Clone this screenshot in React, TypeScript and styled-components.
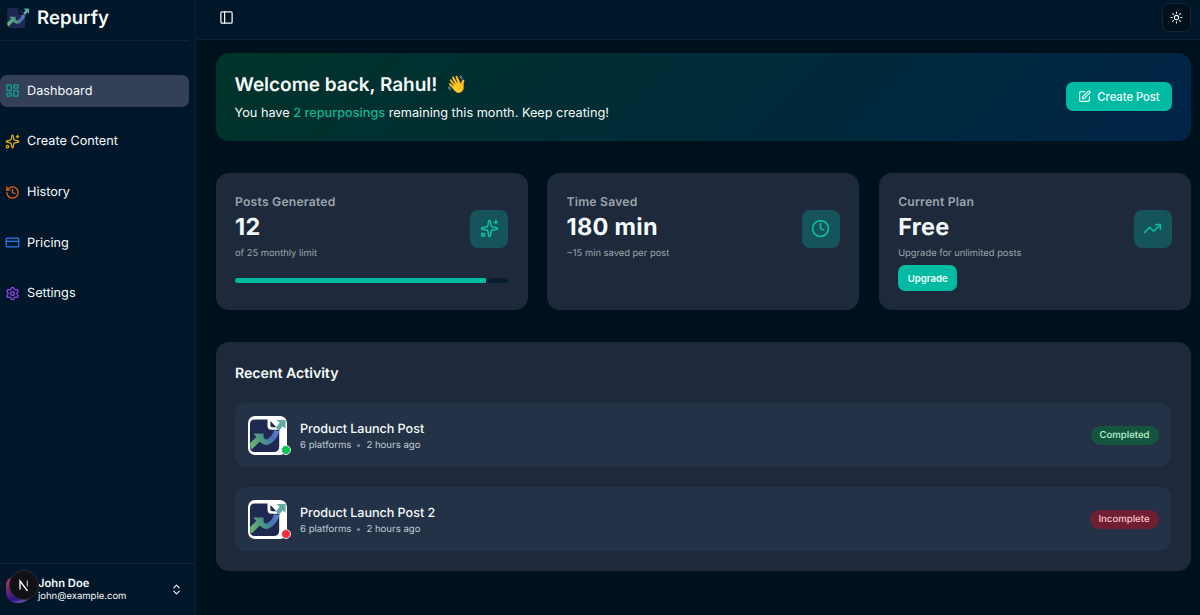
import React from "react";
import styled, { createGlobalStyle } from "styled-components";
import {
  ChevronsUpDown,
  Clock,
  CreditCard,
  History,
  LayoutDashboard,
  PanelLeft,
  Settings,
  Sparkles,
  SquarePen,
  Sun,
  TrendingUp,
} from "lucide-react";

const GlobalStyle = createGlobalStyle`
  *, *::before, *::after { box-sizing: border-box; }
  body {
    margin: 0;
    background: #00111e;
    color: #f5fafa;
    font-family: Inter, "Liberation Sans", sans-serif;
    -webkit-font-smoothing: antialiased;
    text-rendering: geometricPrecision;
  }
  h1, h2, h3, p { margin: 0; }
  button { font: inherit; border: 0; padding: 0; color: inherit; }
`;

const Shell = styled.div`
  display: grid;
  grid-template-columns: 196px 1fr;
  height: 615px;
  overflow: hidden;
`;

const Sidebar = styled.aside`
  display: flex;
  flex-direction: column;
  background: #001629;
  border-right: 1px solid #0a2231;
`;

const Brand = styled.div`
  display: flex;
  align-items: center;
  gap: 7px;
  height: 41px;
  width: 189px;
  padding: 0 0 4px 6px;
  border-bottom: 1px solid #0c2436;
`;

const BrandName = styled.span`
  font-size: 18.6px;
  font-weight: 600;
  line-height: 24px;
  letter-spacing: 0.05px;
`;

const Nav = styled.nav`
  display: flex;
  flex-direction: column;
  gap: 19.2px;
  width: 189px;
  padding-top: 34px;
  flex: 1;
`;

const NavItem = styled.a<{ $active?: boolean }>`
  display: flex;
  align-items: center;
  gap: 7px;
  height: 31.5px;
  padding-left: 5px;
  border-radius: 7px;
  font-size: 12.7px;
  background: ${(p) => (p.$active ? "#334057" : "transparent")};
`;

const NavLabel = styled.span`
  padding-top: 1.6px;
  line-height: 18px;
`;

const UserBar = styled.div`
  display: flex;
  align-items: center;
  height: 52px;
  padding: 0 12px 0 6px;
  border-top: 1px solid #0c2436;
`;

const AvatarStack = styled.div`
  position: relative;
  width: 32px;
  height: 32px;
  flex: none;
`;

const Avatar = styled.div`
  width: 26px;
  height: 26px;
  margin-top: 3px;
  border-radius: 8px 8px 13px 10px;
  background: linear-gradient(165deg, #b03560 10%, #6b2470 45%, #2b1685 75%, #8b7fb0 100%);
`;

const DevBadge = styled.div`
  position: absolute;
  left: 4px;
  top: -3px;
  width: 28px;
  height: 28px;
  border-radius: 50%;
  background: #111116;
  box-shadow: 0 0 0 1px #2b2a30;
  display: flex;
  align-items: center;
  justify-content: center;
`;

const UserText = styled.div`
  flex: 1;
  display: flex;
  flex-direction: column;
  padding-top: 2px;
`;

const UserName = styled.span`
  font-size: 11.2px;
  font-weight: 600;
  line-height: 13px;
`;

const UserMail = styled.span`
  font-size: 9.5px;
  line-height: 14px;
`;

const Main = styled.main`
  display: flex;
  flex-direction: column;
  min-width: 0;
`;

const TopBar = styled.header`
  display: flex;
  align-items: center;
  justify-content: space-between;
  height: 40px;
  padding: 0 9px 4px 23px;
  background: #001629;
  border-bottom: 1px solid #0a2231;
`;

const ThemeButton = styled.button`
  display: flex;
  align-items: center;
  justify-content: center;
  width: 29px;
  height: 29px;
  border: 1px solid #162733;
  border-radius: 7px;
  background: #00111e;
`;

const Content = styled.div`
  display: flex;
  flex-direction: column;
  gap: 32px;
  padding: 13px 9px 0 19.5px;
`;

const Banner = styled.section`
  display: flex;
  align-items: center;
  justify-content: space-between;
  height: 88px;
  padding: 0 19px;
  border-radius: 13px;
  background: linear-gradient(135deg, #003329, #002447);
`;

const Welcome = styled.h1`
  display: flex;
  align-items: center;
  gap: 9px;
  font-size: 19px;
  line-height: 26px;
  font-weight: 600;
  letter-spacing: -0.02px;
`;

const Wave = styled.span`
  font-size: 17px;
`;

const WelcomeNote = styled.p`
  margin-top: 6px;
  font-size: 12.72px;
  line-height: 19px;
`;

const Accent = styled.span`
  color: #13b394;
  font-weight: 500;
`;

const PrimaryButton = styled.button<{ $small?: boolean }>`
  display: inline-flex;
  align-items: center;
  justify-content: center;
  gap: 6px;
  align-self: ${(p) => (p.$small ? "flex-start" : "auto")};
  width: ${(p) => (p.$small ? 59 : 106)}px;
  height: ${(p) => (p.$small ? 26 : 29)}px;
  margin-top: ${(p) => (p.$small ? 0 : -1)}px;
  border-radius: 7px;
  background: #00bba2;
  color: #f4fffd;
  font-size: ${(p) => (p.$small ? 9.6 : 11.2)}px;
  font-weight: ${(p) => (p.$small ? 600 : 500)};
`;

const Stats = styled.section`
  display: grid;
  grid-template-columns: repeat(3, 1fr);
  gap: 19.2px;
`;

const StatCard = styled.article`
  display: flex;
  flex-direction: column;
  height: 137px;
  padding: 20px 19.5px 0;
  border-radius: 13px;
  background: #1e2a3c;
`;

const StatTop = styled.div`
  display: flex;
  align-items: center;
  justify-content: space-between;
  height: 70px;
`;

const StatLabel = styled.h3`
  color: #9ca5ab;
  font-size: 12.2px;
  line-height: 18px;
  font-weight: 600;
  letter-spacing: 0.2px;
`;

const StatValue = styled.p`
  font-size: 23.5px;
  line-height: 32px;
  font-weight: 700;
  letter-spacing: 0.3px;
`;

const StatHint = styled.p`
  padding-top: 2px;
  color: #9ca5ab;
  font-size: 9.4px;
  line-height: 18px;
`;

const StatIcon = styled.div`
  display: flex;
  align-items: center;
  justify-content: center;
  width: 38px;
  height: 38px;
  margin-top: 1px;
  border-radius: 8px;
  background: #14545a;
  color: #12bd9f;
`;

const Track = styled.div`
  height: 5px;
  margin-top: 14.5px;
  border-radius: 3px;
  overflow: hidden;
  background: #0b1e2f;
`;

const TrackFill = styled.div`
  height: 100%;
  background: #00bba2;
`;

const Upgrade = styled.div`
  display: flex;
  padding-top: 2px;
`;

const Panel = styled.section`
  height: 229px;
  padding: 20px 20px 0 19.5px;
  border-radius: 13px;
  background: #1e2a3c;
`;

const PanelTitle = styled.h2`
  font-size: 14.2px;
  line-height: 24px;
  font-weight: 600;
  letter-spacing: -0.05px;
`;

const Rows = styled.div`
  display: flex;
  flex-direction: column;
  gap: 20px;
  padding-top: 17px;
`;

const Row = styled.article`
  display: flex;
  align-items: center;
  height: 64px;
  padding: 0 12.5px;
  border-radius: 11px;
  background: #243247;
`;

const Thumb = styled.div`
  position: relative;
  width: 39px;
  height: 39px;
  margin-right: 13.5px;
  border-radius: 7px;
  background: #fff;
`;

const StatusDot = styled.span<{ $done: boolean }>`
  position: absolute;
  right: -4px;
  bottom: 0;
  width: 10px;
  height: 10px;
  border-radius: 50%;
  border: 1px solid #e8eeee;
  background: ${(p) => (p.$done ? "#00c551" : "#fb2c36")};
`;

const RowText = styled.div`
  flex: 1;
  padding-top: 4px;
`;

const RowTitle = styled.h3`
  font-size: 12.6px;
  line-height: 17px;
  font-weight: 550;
  letter-spacing: -0.04px;
`;

const RowMeta = styled.p`
  display: flex;
  align-items: center;
  gap: 6px;
  color: #c0cad7;
  font-size: 9.6px;
  line-height: 15px;
`;

const Bullet = styled.span`
  width: 3px;
  height: 3px;
  border-radius: 50%;
  background: #7d8a9c;
`;

const Badge = styled.span<{ $done: boolean }>`
  display: flex;
  align-items: center;
  justify-content: center;
  width: ${(p) => (p.$done ? 68 : 69)}px;
  height: 19px;
  border-radius: 10px;
  font-size: 9.6px;
  font-weight: 500;
  background: ${(p) => (p.$done ? "#155540" : "#701f32")};
  color: ${(p) => (p.$done ? "#b5f5cd" : "#fcc8ca")};
`;

function Mark({ size, id }: { size: number; id: string }) {
  return (
    <svg width={size} height={size} viewBox="0 0 40 40" fill="none">
      <defs>
        <linearGradient id={id} x1="2" y1="30" x2="34" y2="14" gradientUnits="userSpaceOnUse">
          <stop stopColor="#6cb66c" />
          <stop offset="0.4" stopColor="#4b9683" />
          <stop offset="0.65" stopColor="#4872b5" />
          <stop offset="1" stopColor="#6f80d8" />
        </linearGradient>
      </defs>
      <path d="M7 3.500H20V10Q20 14 24 14H32V31Q32 37 26 37H7Q2 37 2 31V8.500Q2 3.500 7 3.500Z" fill="#1e2850" />
      <path d="M23 5L29 11.500H25Q23 11.500 23 9.500Z" fill="#1e2850" />
      <path d="M2 28L8.500 21.500L5.500 18H16V28L13 25.500L4 34Q2 33 2 28Z" fill={`url(#${id})`} />
      <path d="M12 21.500Q17 30 23 25Q28 21 29.500 15" stroke={`url(#${id})`} strokeWidth="5.500" />
      <path d="M29 4H38.500V13L35.500 10.500L32 15L28.500 12L32.500 7Z" fill="#62a9a5" />
    </svg>
  );
}

const navigation = [
  { label: "Dashboard", icon: LayoutDashboard, color: "#12a594" },
  { label: "Create Content", icon: Sparkles, color: "#e5b010" },
  { label: "History", icon: History, color: "#e8650c" },
  { label: "Pricing", icon: CreditCard, color: "#2f7ef0" },
  { label: "Settings", icon: Settings, color: "#9747ee" },
];

const activity = [
  { title: "Product Launch Post", done: true },
  { title: "Product Launch Post 2", done: false },
];

export default function App() {
  return (
    <>
      <GlobalStyle />
      <Shell>
        <Sidebar>
          <Brand>
            <Mark size={24} id="brand-mark" />
            <BrandName>Repurfy</BrandName>
          </Brand>
          <Nav>
            {navigation.map(({ label, icon: Icon, color }, i) => (
              <NavItem key={label} $active={i === 0}>
                <Icon size={15} color={color} />
                <NavLabel>{label}</NavLabel>
              </NavItem>
            ))}
          </Nav>
          <UserBar>
            <AvatarStack>
              <Avatar />
              <DevBadge>
                <svg width="12" height="12" viewBox="0 0 12 12" fill="none">
                  <path d="M2 10.5V2L9.5 12" stroke="#fff" strokeWidth="1.3" />
                  <path d="M9.3 1.5V7.5" stroke="#bbb" strokeWidth="1.2" />
                </svg>
              </DevBadge>
            </AvatarStack>
            <UserText>
              <UserName>John Doe</UserName>
              <UserMail>john@example.com</UserMail>
            </UserText>
            <ChevronsUpDown size={13} />
          </UserBar>
        </Sidebar>
        <Main>
          <TopBar>
            <PanelLeft size={15} />
            <ThemeButton>
              <Sun size={13} />
            </ThemeButton>
          </TopBar>
          <Content>
            <Banner>
              <div>
                <Welcome>
                  Welcome back, Rahul! <Wave>👋</Wave>
                </Welcome>
                <WelcomeNote>
                  You have <Accent>2 repurposings</Accent> remaining this month. Keep creating!
                </WelcomeNote>
              </div>
              <PrimaryButton>
                <SquarePen size={13} />
                Create Post
              </PrimaryButton>
            </Banner>
            <Stats>
              <StatCard>
                <StatTop>
                  <div>
                    <StatLabel>Posts Generated</StatLabel>
                    <StatValue>12</StatValue>
                    <StatHint>of 25 monthly limit</StatHint>
                  </div>
                  <StatIcon>
                    <Sparkles size={19} />
                  </StatIcon>
                </StatTop>
                <Track>
                  <TrackFill style={{ width: "91.7%" }} />
                </Track>
              </StatCard>
              <StatCard>
                <StatTop>
                  <div>
                    <StatLabel>Time Saved</StatLabel>
                    <StatValue>180 min</StatValue>
                    <StatHint>~15 min saved per post</StatHint>
                  </div>
                  <StatIcon>
                    <Clock size={19} />
                  </StatIcon>
                </StatTop>
              </StatCard>
              <StatCard>
                <StatTop>
                  <div>
                    <StatLabel>Current Plan</StatLabel>
                    <StatValue>Free</StatValue>
                    <StatHint>Upgrade for unlimited posts</StatHint>
                  </div>
                  <StatIcon>
                    <TrendingUp size={19} />
                  </StatIcon>
                </StatTop>
                <Upgrade>
                  <PrimaryButton $small>Upgrade</PrimaryButton>
                </Upgrade>
              </StatCard>
            </Stats>
            <Panel>
              <PanelTitle>Recent Activity</PanelTitle>
              <Rows>
                {activity.map((item, i) => (
                  <Row key={item.title}>
                    <Thumb>
                      <Mark size={39} id={`thumb-${i}`} />
                      <StatusDot $done={item.done} />
                    </Thumb>
                    <RowText>
                      <RowTitle>{item.title}</RowTitle>
                      <RowMeta>
                        6 platforms <Bullet /> 2 hours ago
                      </RowMeta>
                    </RowText>
                    <Badge $done={item.done}>{item.done ? "Completed" : "Incomplete"}</Badge>
                  </Row>
                ))}
              </Rows>
            </Panel>
          </Content>
        </Main>
      </Shell>
    </>
  );
}
